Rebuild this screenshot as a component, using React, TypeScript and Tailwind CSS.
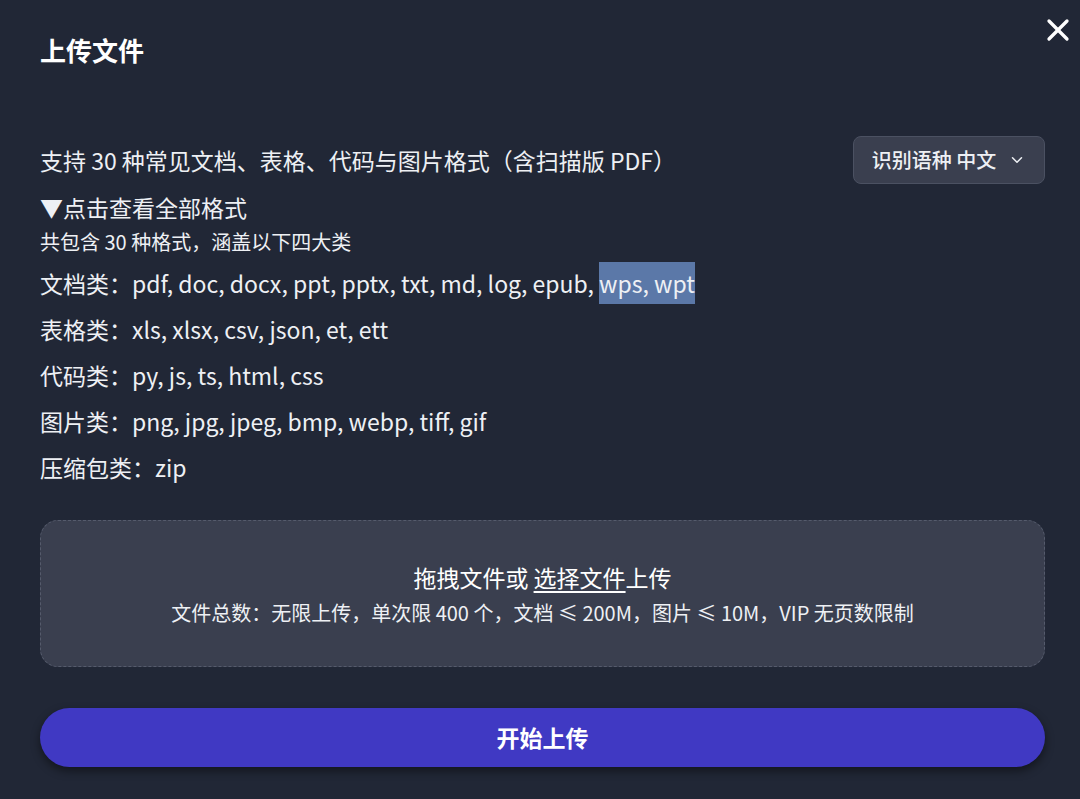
import { ChevronDown, X } from 'lucide-react';

const categories = [
  { label: '文档类：', items: 'pdf, doc, docx, ppt, pptx, txt, md, log, epub, ', selected: 'wps, wpt' },
  { label: '表格类：', items: 'xls, xlsx, csv, json, et, ett' },
  { label: '代码类：', items: 'py, js, ts, html, css' },
  { label: '图片类：', items: 'png, jpg, jpeg, bmp, webp, tiff, gif' },
  { label: '压缩包类：', items: 'zip' },
];

export default function App() {
  return (
    <div
      className="relative min-h-[799px] w-full bg-[#212736] pl-10 pr-[35px] pt-8 text-[#eef0f4]"
      style={{ fontFamily: '"Noto Sans CJK SC", "Noto Sans", sans-serif' }}
    >
      <button className="absolute right-[4px] top-[12px] text-white">
        <X size={36} strokeWidth={2.2} />
      </button>

      <h1 className="text-[26px] font-bold leading-[36px] text-white">上传文件</h1>

      <div className="mt-[68px] flex h-12 items-center justify-between">
        <p className="text-[23px] leading-[30px]">支持 30 种常见文档、表格、代码与图片格式（含扫描版 PDF）</p>
        <button className="flex h-12 w-[192px] items-center justify-center gap-3 rounded-lg border border-[#4b5162] bg-[#3a3f4f] text-[20px] font-medium">
          识别语种 中文
          <ChevronDown size={18} strokeWidth={2} />
        </button>
      </div>

      <div className="mt-2 text-[23px] leading-[30px]">▼点击查看全部格式</div>
      <div className="mt-[6px] text-[20px] leading-[28px]">共包含 30 种格式，涵盖以下四大类</div>

      <div className="mt-1">
        {categories.map((c) => (
          <div key={c.label} className="text-[23px] leading-[46px]">
            {c.label}
            {c.items}
            {c.selected && <span className="bg-[#5b78a8] py-[4px]">{c.selected}</span>}
          </div>
        ))}
      </div>

      <div className="mt-[30px] flex h-[147px] flex-col items-center justify-center gap-[6px] rounded-[18px] border border-dashed border-[#555b6c] bg-[#3a3f4f]">
        <p className="text-[23px] leading-[32px] text-white">
          拖拽文件或 <span className="underline underline-offset-4">选择文件</span>上传
        </p>
        <p className="text-[20px] leading-[28px]">
          文件总数：无限上传，单次限 400 个，文档 ≤ 200M，图片 ≤ 10M，VIP 无页数限制
        </p>
      </div>

      <button className="mt-[41px] flex h-[59px] w-full items-center justify-center rounded-full bg-[#4039c3] text-[23px] font-bold text-white shadow-[0_4px_10px_rgba(0,0,0,0.45)]">
        开始上传
      </button>
    </div>
  );
}
